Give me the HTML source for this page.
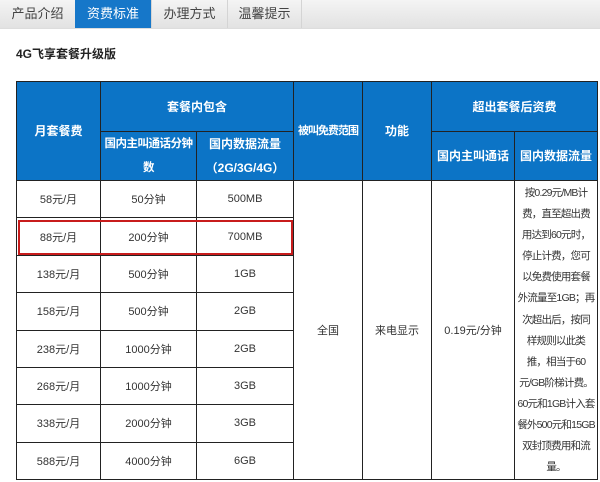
<!DOCTYPE html>
<html><head><meta charset="utf-8"><style>
body{margin:0;width:600px;height:482px;background:#fff;font-family:"Liberation Sans","Noto Sans CJK SC",sans-serif;position:relative;overflow:hidden}
.tabs{position:absolute;left:0;top:0;width:600px;height:28px;background:linear-gradient(#f4f4f4,#e2e2e2);border-bottom:1px solid #ddd}
.tab{position:absolute;top:0;height:28px;line-height:28px;text-align:center;font-size:13px;color:#444;border-right:1px solid #d4d4d4}
.tab.a{background:#1677c9;color:#fff}
h4{position:absolute;left:16px;top:45px;margin:0;font-size:12px;font-weight:bold;color:#222}
table{position:absolute;left:16px;top:81px;width:581px;border-collapse:collapse;table-layout:fixed;font-size:11px;color:#333}
td{border:1px solid #222;text-align:center;padding:0;overflow:hidden}
th{border:1px solid #222;background:#0c74c6;color:#fff;font-size:12px;font-weight:bold;padding:0;line-height:24px;overflow:hidden;white-space:nowrap}
tbody td{height:36px}
.box{position:absolute;left:18px;top:220px;width:271px;height:31px;border:2px solid #c81c1c}
.fee{height:296px;line-height:21.1px;font-size:10.5px;white-space:nowrap;letter-spacing:-0.8px;overflow:hidden;padding-top:2px}
</style></head><body>
<div class="tabs">
<div class="tab" style="left:0;width:75px">产品介绍</div>
<div class="tab a" style="left:75px;width:76px">资费标准</div>
<div class="tab" style="left:152px;width:75px">办理方式</div>
<div class="tab" style="left:228px;width:73px">温馨提示</div>
</div>
<h4>4G飞享套餐升级版</h4>
<table>
<colgroup><col style="width:84px"><col style="width:96px"><col style="width:97px"><col style="width:69px"><col style="width:69px"><col style="width:83px"><col style="width:83px"></colgroup>
<thead>
<tr style="height:50px"><th rowspan="2">月套餐费</th><th colspan="2">套餐内包含</th><th rowspan="2" style="font-size:11px;letter-spacing:-1px">被叫免费范围</th><th rowspan="2">功能</th><th colspan="2">超出套餐后资费</th></tr>
<tr style="height:49px"><th style="font-size:11.5px;letter-spacing:-0.5px">国内主叫通话分钟<br>数</th><th>国内数据流量<br>（2G/3G/4G）</th><th>国内主叫通话</th><th>国内数据流量</th></tr>
</thead>
<tbody>
<tr><td>58元/月</td><td>50分钟</td><td>500MB</td><td rowspan="8">全国</td><td rowspan="8">来电显示</td><td rowspan="8">0.19元/分钟</td><td rowspan="8"><div class="fee">按0.29元/MB计<br>费，直至超出费<br>用达到60元时，<br>停止计费，您可<br>以免费使用套餐<br>外流量至1GB；再<br>次超出后，按同<br>样规则以此类<br>推，相当于60<br>元/GB阶梯计费。<br>60元和1GB计入套<br>餐外500元和15GB<br>双封顶费用和流<br>量。</div></td></tr>
<tr><td>88元/月</td><td>200分钟</td><td>700MB</td></tr>
<tr><td>138元/月</td><td>500分钟</td><td>1GB</td></tr>
<tr><td>158元/月</td><td>500分钟</td><td>2GB</td></tr>
<tr><td>238元/月</td><td>1000分钟</td><td>2GB</td></tr>
<tr><td>268元/月</td><td>1000分钟</td><td>3GB</td></tr>
<tr><td>338元/月</td><td>2000分钟</td><td>3GB</td></tr>
<tr><td>588元/月</td><td>4000分钟</td><td>6GB</td></tr>
</tbody>
</table>
<div class="box"></div>
</body></html>
